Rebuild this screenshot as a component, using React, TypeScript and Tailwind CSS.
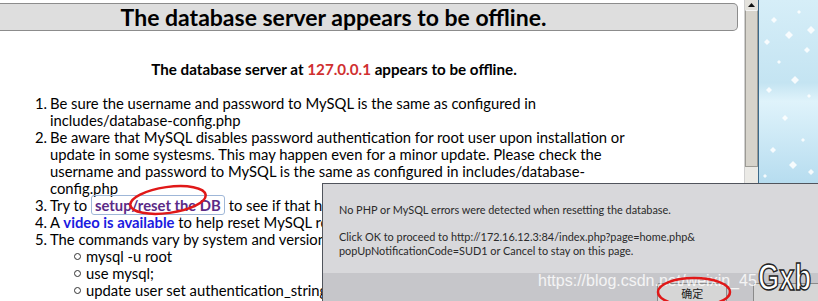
import React from "react";

const Row = ({ n, children }: { n?: string; children: React.ReactNode }) => (
  <div className="flex h-[17px] leading-[17px] whitespace-nowrap">
    <span className="w-[50px] text-right pr-[3px] shrink-0">{n ?? ""}</span>
    <span>{children}</span>
  </div>
);

const Sub = ({ children }: { children: React.ReactNode }) => (
  <div className="flex h-[17px] leading-[17px] whitespace-nowrap items-center">
    <span className="w-[74px] shrink-0" />
    <span className="w-[7px] h-[7px] rounded-full border border-[#333] shrink-0 mr-[5px]" />
    <span>{children}</span>
  </div>
);

export default function App() {
  return (
    <div
      className="relative w-[818px] h-[301px] overflow-hidden bg-white flex text-black"
      style={{ fontFamily: 'Lato, "Open Sans", sans-serif' }}
    >
      {/* page */}
      <div className="w-[744px] shrink-0 flex flex-col">
        <div className="mt-[3px] h-[28px] w-[738px] bg-[#dedede] border-y border-r border-[#8c8c8c] rounded-r-[5px] flex items-center justify-center pr-[70px]">
          <span className="text-[23px] font-bold leading-none">
            The database server appears to be offline.
          </span>
        </div>
        <div className="mt-[29px] h-[18px] flex justify-center pr-[76px] text-[15.2px] font-bold leading-[18px] whitespace-nowrap">
          <span>
            The database server at <span className="text-[#d03030]">127.0.0.1</span> appears to be offline.
          </span>
        </div>
        <div className="mt-[17px] text-[14.8px]">
          <Row n="1.">Be sure the username and password to MySQL is the same as configured in</Row>
          <Row>includes/database-config.php</Row>
          <Row n="2.">Be aware that MySQL disables password authentication for root user upon installation or</Row>
          <Row>update in some systesms. This may happen even for a minor update. Please check the</Row>
          <Row>username and password to MySQL is the same as configured in includes/database-</Row>
          <Row>config.php</Row>
          <Row n="3.">
            Try to{" "}
            <span className="inline-block h-[20px] leading-[18px] -my-[2px] px-[3px] border border-[#9fb7d8] rounded-[3px] font-bold text-[#5b2a86]">
              setup/reset the DB
            </span>{" "}
            to see if that helps.
          </Row>
          <Row n="4.">
            A <span className="font-bold text-[#1a1ae0]">video is available</span> to help reset MySQL root password.
          </Row>
          <Row n="5.">The commands vary by system and version, but may be similar to</Row>
          <Sub>mysql -u root</Sub>
          <Sub>use mysql;</Sub>
          <Sub>update user set authentication_string=password('') where user='root';</Sub>
        </div>
      </div>

      {/* scrollbar */}
      <div className="w-[14px] h-[184px] shrink-0 bg-[#ebeae6] border-l border-[#d0d0d0] flex flex-col">
        <div className="h-[10px] flex items-center justify-center bg-[#e4e2dc]">
          <svg width="7" height="4" viewBox="0 0 7 4">
            <path d="M0 4 L3.5 0 L7 4 Z" fill="#111" />
          </svg>
        </div>
        <div className="h-[157px] bg-[#d6d3cb] border border-[#9c9a94] border-t-[#f5f5f5]" />
      </div>

      {/* desktop background */}
      <div className="flex-1 h-[184px] relative border-l border-[#3d6a8a] bg-[linear-gradient(180deg,#d6eef8_0%,#c4e4f2_45%,#dff3fb_55%,#b6dcef_100%)] overflow-hidden">
        <svg className="absolute inset-0" width="60" height="184" viewBox="0 0 60 184">
          {[
            [15, 20, 3], [40, 12, 2], [52, 30, 4], [8, 42, 3], [30, 35, 4], [48, 50, 3],
            [20, 62, 2], [36, 80, 4], [10, 90, 3], [50, 96, 2], [26, 118, 3], [44, 140, 2],
            [14, 150, 3], [34, 165, 4], [52, 172, 3], [6, 176, 2],
          ].map(([x, y, r], i) => (
            <path key={i} d={`M${x} ${y - r} L${x + r} ${y} L${x} ${y + r} L${x - r} ${y} Z`} fill="#ffffff" opacity={0.85} />
          ))}
        </svg>
      </div>

      {/* red annotation on link */}
      <svg className="absolute left-[128px] top-[184px]" width="82" height="34" viewBox="0 0 82 34">
        <ellipse cx="40" cy="16" rx="38" ry="13" fill="none" stroke="#e01818" strokeWidth="2.5" transform="rotate(-8 40 16)" />
      </svg>

      {/* dialog */}
      <div className="absolute left-[322px] top-[183px] w-[500px] h-[120px] bg-[#d8d8db] border-l border-t border-[#50545c] flex flex-col">
        <div className="h-[89px] pl-[16px] pt-[19px] text-[10.9px] text-[#2a2a2a] leading-[14px] whitespace-nowrap">
          <div>No PHP or MySQL errors were detected when resetting the database.</div>
          <div className="mt-[13px]">Click OK to proceed to http://172.16.12.3:84/index.php?page=home.php&amp;</div>
          <div>popUpNotificationCode=SUD1 or Cancel to stay on this page.</div>
        </div>
        <div className="flex-1 bg-[#c6c6ca] flex items-end">
          <div
            className="ml-[334px] w-[74px] h-[20px] bg-[#d6d6d6] border border-[#8a8a8a] rounded-t-[2px] flex items-center justify-center text-[11px] text-[#222]"
            style={{ fontFamily: '"Noto Sans CJK SC", sans-serif' }}
          >
            确定
          </div>
          <div className="ml-[26px] w-[72px] h-[20px] bg-[#d6d6d6] border border-[#8a8a8a] rounded-t-[2px]" />
        </div>
      </div>

      {/* watermark */}
      <div
        className="absolute left-[538px] top-[269px] text-[16px] text-white/80 whitespace-nowrap"
        style={{ fontFamily: '"Liberation Sans", Arial, sans-serif' }}
      >
        https://blog.csdn.net/weixin_45
      </div>
      <div
        className="absolute left-[758px] top-[260px] text-[36px] font-bold text-white leading-none origin-left scale-x-[0.76]"
        style={{ fontFamily: '"Liberation Sans", Arial, sans-serif', WebkitTextStroke: "1.5px #222" }}
      >
        Gxb
      </div>

      {/* red annotation on OK button */}
      <svg className="absolute left-[654px] top-[272px]" width="80" height="34" viewBox="0 0 80 34">
        <ellipse cx="40" cy="20" rx="36" ry="14" fill="none" stroke="#e01818" strokeWidth="2.5" />
      </svg>
    </div>
  );
}
